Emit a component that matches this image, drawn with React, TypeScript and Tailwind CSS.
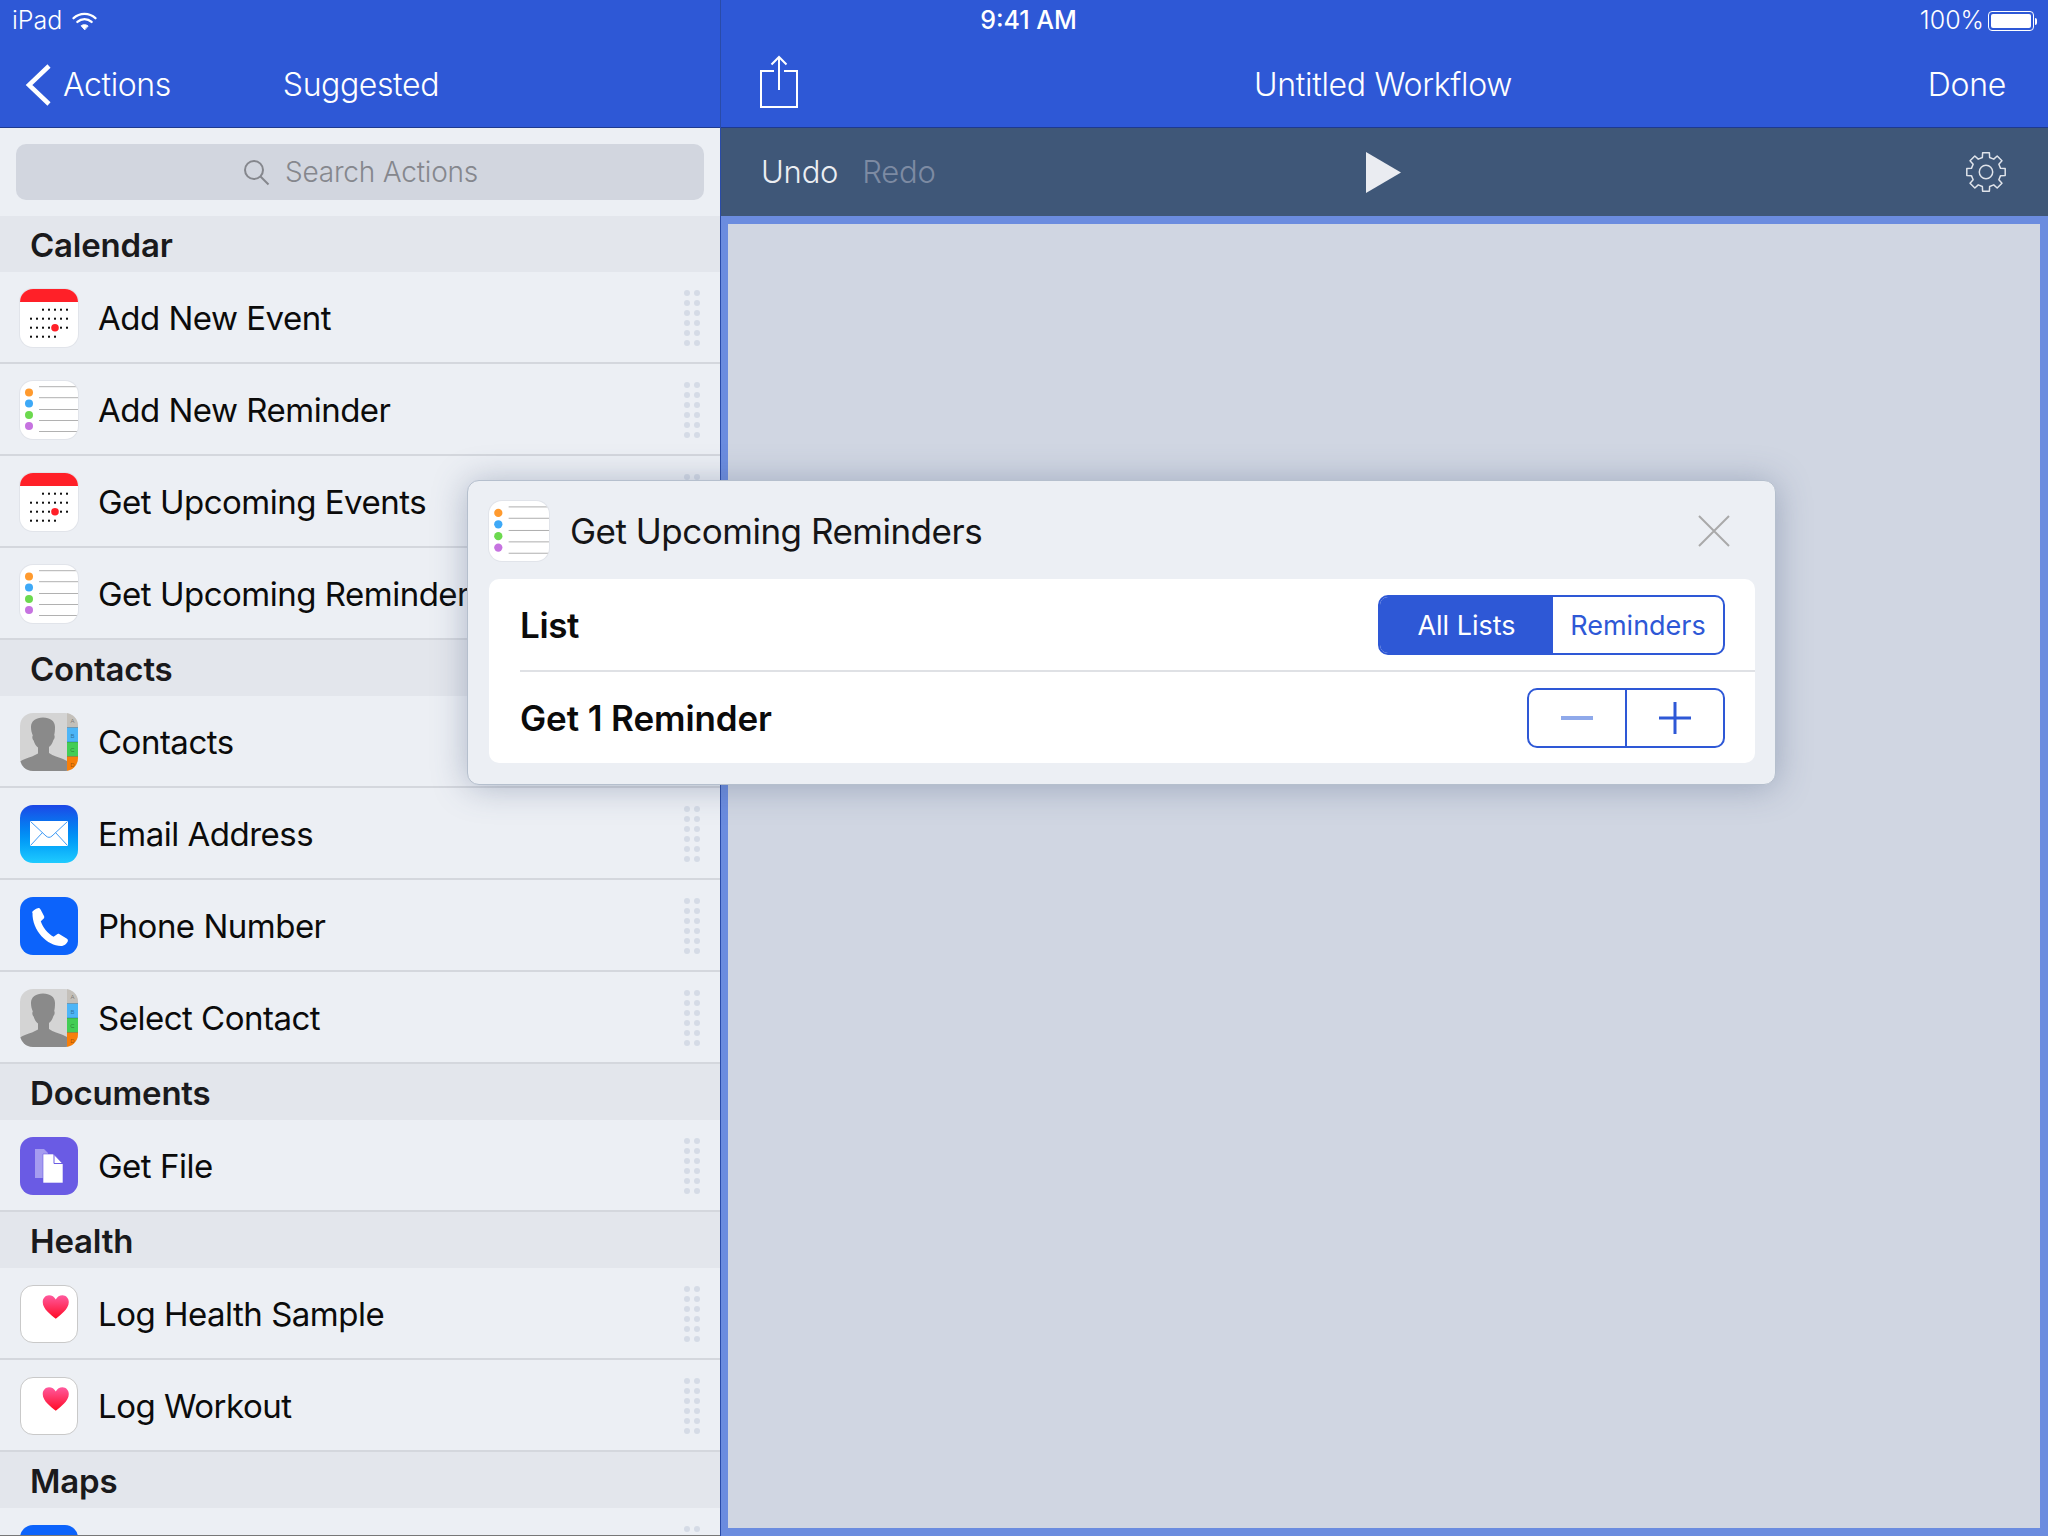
import React from "react";

const FONT = "font-['Inter','Noto_Sans',sans-serif]";

function IconShell({ size = 58, className = "", children }: { size?: number; className?: string; children: React.ReactNode }) {
  return (
    <div
      className={`shrink-0 overflow-hidden rounded-[13px] ${className}`}
      style={{ width: size, height: size }}
    >
      {children}
    </div>
  );
}

function CalendarIcon() {
  const rows = [
    { y: 20.7, xs: [23, 29, 35, 41, 47] },
    { y: 29.7, xs: [11, 17, 23, 29, 35, 41, 47] },
    { y: 38.7, xs: [11, 17, 23, 29, 41, 47] },
    { y: 47.7, xs: [11, 17, 23, 29, 35] },
  ];
  return (
    <IconShell className="bg-white shadow-[0_0_0_1px_#e1e4ea]">
      <svg viewBox="0 0 58 58" className="h-full w-full">
        <rect width="58" height="13" fill="#ff2028" />
        {rows.map((r) =>
          r.xs.map((x) => <rect key={`${r.y}-${x}`} x={x - 1} y={r.y - 1} width="2" height="2" fill="#111" />)
        )}
        <circle cx="35" cy="38.7" r="3.8" fill="#ff2028" />
      </svg>
    </IconShell>
  );
}

function RemindersIcon({ size = 58 }: { size?: number }) {
  const dots = [
    { y: 11.5, c: "#ff9a2e" },
    { y: 22.5, c: "#3ea9f7" },
    { y: 34, c: "#6cd94e" },
    { y: 45, c: "#c673e0" },
  ];
  return (
    <IconShell size={size} className="bg-white shadow-[0_0_0_1px_#e1e4ea]">
      <svg viewBox="0 0 58 58" className="h-full w-full">
        {[5.7, 16.7, 28.5, 39.5, 50.5].map((y) => (
          <line key={y} x1="19" x2="58" y1={y} y2={y} stroke="#a8a8a8" strokeWidth="0.9" />
        ))}
        {dots.map((d) => (
          <circle key={d.y} cx="9" cy={d.y} r="4" fill={d.c} />
        ))}
      </svg>
    </IconShell>
  );
}

function ContactsIcon() {
  return (
    <IconShell className="bg-[#d4d4d4]">
      <svg viewBox="0 0 58 58" className="h-full w-full">
        <path
          d="M11 14c0-6 5-9.500 12-9.500S35 8 35 14c0 3-.2 6-.8 8 .8 1 .6 3.500-.8 5-1 3.500-2.400 5.500-4.400 7v6c4 3 10 4 14 6l4 2v10.500H0V48.500c3-2.500 8-3.500 12-5l6-3v-6c-2-1.500-3.400-3.500-4.400-7-1.400-1.500-1.600-4-.8-5-.8-2-1.800-5-1.800-8z"
          fill="#8a8a8a"
        />
        <rect x="47" width="11" height="14.500" fill="#c4c0ba" />
        <rect x="47" y="14.500" width="11" height="14.500" fill="#4db5f7" />
        <rect x="47" y="29" width="11" height="14.500" fill="#43cd55" />
        <rect x="47" y="43.500" width="11" height="14.500" fill="#f77f0a" />
        <path d="M47 14.500h11M47 29h11M47 43.500h11" stroke="#00000040" strokeWidth="0.8" />
        {["A", "B", "C", "D"].map((l, i) => (
          <text key={l} x="52.500" y={10 + i * 14.500} fontSize="6" textAnchor="middle" fill="#00000066" fontFamily="Liberation Sans">
            {l}
          </text>
        ))}
      </svg>
    </IconShell>
  );
}

function MailIcon() {
  return (
    <IconShell className="bg-gradient-to-b from-[#1c46e6] to-[#1fcbff]">
      <svg viewBox="0 0 58 58" className="h-full w-full">
        <rect x="10" y="16" width="38" height="25" fill="#fff" />
        <path d="M10.500 16.500 26 31c2 1.800 4 1.800 6 0l15.500-14.500M10.500 40.500 22.500 27.500M47.500 40.500 35.500 27.500" fill="none" stroke="#3f9af5" strokeWidth="1" />
      </svg>
    </IconShell>
  );
}

function PhoneIcon() {
  return (
    <IconShell className="bg-[#0c63fb]">
      <svg viewBox="0 0 58 58" className="h-full w-full">
        <path
          d="M12 15.500c0-1.500 5-4.500 6.500-4.500 1 0 1.500.5 2.200 1.700l3.300 6.300c.5 1.100.3 2-.5 2.800l-2.700 2.500c1.500 5.500 7 12.500 12.800 15.500l3.200-2.400c.9-.7 1.800-.7 2.800-.1l6.600 4c1.200.7 1.700 1.300 1.700 2.100 0 2.300-3.700 5.600-7 5.600-13 0-29-15-28.400-33.500z"
          fill="#fff"
        />
      </svg>
    </IconShell>
  );
}

function FileIcon() {
  return (
    <IconShell className="bg-[#6a5be4]">
      <svg viewBox="0 0 58 58" className="h-full w-full">
        <path d="M15 12h9l4 4v25H15z" fill="#a59cf0" />
        <path d="M23 17h10.500L43 27v19H23z" fill="#fff" stroke="#6a5be4" strokeWidth="0.6" />
        <path d="M34 17v9.500h9" fill="none" stroke="#6a5be4" strokeWidth="1" />
      </svg>
    </IconShell>
  );
}

function HealthIcon() {
  return (
    <IconShell className="border border-[#c9c9c9] bg-white">
      <svg viewBox="0 0 58 58" className="h-full w-full">
        <defs>
          <linearGradient id="heartFill" x1="0" x2="0" y1="0" y2="1">
            <stop offset="0" stopColor="#ff5a9e" />
            <stop offset="1" stopColor="#ff0a25" />
          </linearGradient>
        </defs>
        <path
          d="M36 34C31 29.500 22.500 24 22.500 16.500 22.500 12.500 25.500 9.500 29 9.500c3 0 5.500 1.500 7 4.500 1.500-3 4-4.500 7-4.500 3.500 0 6.500 3 6.500 7C49.500 24 41 29.500 36 34z"
          fill="url(#heartFill)"
        />
      </svg>
    </IconShell>
  );
}

function MapsIcon() {
  return <IconShell className="bg-[#0c63fb]">{null}</IconShell>;
}

// 8 teeth, outline only
function gearPath() {
  const pt = (r: number, deg: number) => {
    const a = (deg * Math.PI) / 180;
    return `${(20 + r * Math.cos(a)).toFixed(2)} ${(20 + r * Math.sin(a)).toFixed(2)}`;
  };
  const parts: string[] = [];
  for (let i = 0; i < 8; i++) {
    const a = i * 45 - 90;
    parts.push(pt(15, a - 14), pt(19.5, a - 10), pt(19.5, a + 10), pt(15, a + 14));
  }
  return `M${parts.join("L")}z`;
}

function Grip() {
  return (
    <div className="mt-px grid h-14 w-4 shrink-0 grid-cols-2 gap-x-1 gap-y-1">
      {Array.from({ length: 12 }).map((_, i) => (
        <span key={i} className="h-1.5 w-1.5 rounded-full bg-[#d5dbe6]" />
      ))}
    </div>
  );
}

function ActionRow({ icon, label }: { icon: React.ReactNode; label: string }) {
  return (
    <div className="flex h-[92px] items-start border-b-2 border-[#d4d7dd] pt-[17px] pl-5 pr-5">
      {icon}
      <span className="ml-5 mt-[5px] flex-1 text-[33px] leading-[48px] tracking-[-0.5px] text-[#0b0b0b]">{label}</span>
      <Grip />
    </div>
  );
}

function SectionHeader({ title }: { title: string }) {
  return (
    <div className="flex h-14 items-center bg-[#e3e6ec] pl-[30px] pt-[4px] text-[33px] font-semibold tracking-[-0.2px] text-[#1a1a1c]">
      {title}
    </div>
  );
}

function StatusBar() {
  return (
    <div className="flex h-10 items-center bg-[#2e58d6] pt-[2px] text-[25px] font-light text-white">
      <div className="flex flex-1 items-center pl-3">
        <span>iPad</span>
        <svg viewBox="0 0 26 20" className="ml-[10px] h-[19px] w-[25px]" fill="none" stroke="#fff" strokeWidth="2.400" strokeLinecap="round">
          <path d="M1.500 6.500c6.500-6 16.500-6 23 0" />
          <path d="M5.500 10.500c4.500-4 10.500-4 15 0" />
          <path d="M13 18.500l-3.500-4c2-1.600 5-1.600 7 0z" fill="#fff" strokeWidth="1" />
        </svg>
      </div>
      <span className="ml-2 font-medium">9:41 AM</span>
      <div className="flex flex-1 items-center justify-end pr-[11px]">
        <span>100%</span>
        <div className="ml-1 h-5 w-[46px] rounded-[4px] border border-white p-[2px]">
          <div className="h-full w-full rounded-[2px] bg-white" />
        </div>
        <div className="ml-px h-[7px] w-[2px] rounded-r bg-white" />
      </div>
    </div>
  );
}

function Sidebar() {
  return (
    <div className="flex h-full w-[720px] shrink-0 flex-col">
      <div className="flex h-[88px] items-center border-b border-[#1e3a8f] bg-[#2e58d6] pt-[3px] text-[32px] font-light tracking-[-0.4px] text-white">
        <svg viewBox="0 0 26 42" className="ml-[25px] h-[42px] w-[26px]" fill="none" stroke="#fff" strokeWidth="4.500">
          <path d="M24 2 4 21l20 19" />
        </svg>
        <span className="ml-[12px]">Actions</span>
        <span className="ml-[112px]">Suggested</span>
      </div>
      <div className="flex h-[88px] shrink-0 items-center bg-[#eceff4] px-4">
        <div className="flex h-14 flex-1 items-center justify-center rounded-[10px] bg-[#d2d6df] text-[28px] font-light tracking-[-0.2px] text-[#85878d]">
          <svg viewBox="0 0 28 28" className="mr-[15px] h-7 w-7" fill="none" stroke="#85878d" strokeWidth="2">
            <circle cx="12" cy="12" r="9" />
            <path d="m18.500 18.500 8 8" />
          </svg>
          Search Actions
        </div>
      </div>
      <div className="min-h-0 flex-1 overflow-hidden border-b border-[#777] bg-[#eceff4]">
        <SectionHeader title="Calendar" />
        <ActionRow icon={<CalendarIcon />} label="Add New Event" />
        <ActionRow icon={<RemindersIcon />} label="Add New Reminder" />
        <ActionRow icon={<CalendarIcon />} label="Get Upcoming Events" />
        <ActionRow icon={<RemindersIcon />} label="Get Upcoming Reminders" />
        <SectionHeader title="Contacts" />
        <ActionRow icon={<ContactsIcon />} label="Contacts" />
        <ActionRow icon={<MailIcon />} label="Email Address" />
        <ActionRow icon={<PhoneIcon />} label="Phone Number" />
        <ActionRow icon={<ContactsIcon />} label="Select Contact" />
        <SectionHeader title="Documents" />
        <ActionRow icon={<FileIcon />} label="Get File" />
        <SectionHeader title="Health" />
        <ActionRow icon={<HealthIcon />} label="Log Health Sample" />
        <ActionRow icon={<HealthIcon />} label="Log Workout" />
        <SectionHeader title="Maps" />
        <ActionRow icon={<MapsIcon />} label="" />
      </div>
    </div>
  );
}

function Editor() {
  return (
    <div className="flex h-full min-w-0 flex-1 flex-col border-l border-[#2a4ba8]">
      <div className="flex h-[88px] shrink-0 items-center border-b border-[#1e3a8f] bg-[#2e58d6] pt-[3px] pl-[39px] pr-[42px] text-[32px] font-light tracking-[-0.3px] text-white">
        <div className="flex-1">
          <svg viewBox="0 0 38 54" className="-mt-[6px] h-[54px] w-[38px]" fill="none" stroke="#fff" strokeWidth="2">
            <path d="M14 16H1v36h36V16H24" />
            <path d="M19 2v33M11.500 9.500 19 2l7.500 7.500" />
          </svg>
        </div>
        <span>Untitled Workflow</span>
        <div className="flex-1 text-right">Done</div>
      </div>
      <div className="flex h-[88px] shrink-0 items-center bg-[#3f5778] pl-[42px] pr-[42px] text-[31px] font-light tracking-[-0.2px]">
        <div className="-ml-[2px] flex flex-1 items-center">
          <span className="text-[#eceef2]">Undo</span>
          <span className="ml-6 text-[#7d8ba3]">Redo</span>
        </div>
        <svg viewBox="0 0 35 41" className="h-[41px] w-[35px]">
          <path d="M0 0l35 20.500L0 41z" fill="#eaecf1" />
        </svg>
        <div className="flex flex-1 justify-end">
          <svg viewBox="0 0 40 40" className="h-10 w-10" fill="none" stroke="#dfe3ea" strokeWidth="1.500" strokeLinejoin="round">
            <path d={gearPath()} />
            <circle cx="20" cy="20" r="6.700" />
          </svg>
        </div>
      </div>
      <div className="min-h-0 flex-1 border-8 border-l-[7px] border-[#6b8cdf] bg-[#d0d6e2]" />
    </div>
  );
}

function ActionDialog() {
  return (
    <div className="absolute left-[467px] top-[480px] w-[1309px] rounded-[12px] border border-[#b5bfcd] bg-[#eceff4] pl-[21px] pr-[20px] pb-[21px] shadow-[0_2px_34px_rgba(70,90,125,0.38)]">
      <div className="flex h-[98px] items-center pt-[2px]">
        <RemindersIcon size={60} />
        <span className="ml-[21px] flex-1 text-[35px] tracking-[-0.5px] text-[#151517]">Get Upcoming Reminders</span>
        <svg viewBox="0 0 32 32" className="mr-[25px] h-8 w-8" fill="none" stroke="#a9a9a9" strokeWidth="2">
          <path d="M1 1l30 30M31 1 1 31" />
        </svg>
      </div>
      <div className="rounded-[10px] bg-white pl-[31px]">
        <div className="flex h-[93px] items-center border-b-2 border-[#dfe1e5] pr-[30px]">
          <span className="mt-[2px] flex-1 text-[35px] font-semibold tracking-[-0.4px] text-[#0b0b0b]">List</span>
          <div className="mt-px flex h-[60px] w-[347px] overflow-hidden rounded-[10px] border-2 border-[#2e58d6] text-[27px]">
            <div className="flex w-[173px] items-center justify-center bg-[#2e58d6] pt-[2px] text-white">All Lists</div>
            <div className="flex flex-1 items-center justify-center pt-[2px] text-[#2e58d6]">Reminders</div>
          </div>
        </div>
        <div className="flex h-[91px] items-center pr-[30px]">
          <span className="mt-[2px] flex-1 text-[35px] font-semibold tracking-[-0.1px] text-[#0b0b0b]">Get 1 Reminder</span>
          <div className="mt-px flex h-[60px] w-[198px] overflow-hidden rounded-[10px] border-2 border-[#2e58d6]">
            <div className="flex flex-1 items-center justify-center border-r-2 border-[#2e58d6]">
              <span className="h-1 w-8 bg-[#8fa9ea]" />
            </div>
            <div className="flex flex-1 items-center justify-center">
              <svg viewBox="0 0 32 32" className="h-8 w-8" stroke="#2e58d6" strokeWidth="3">
                <path d="M0 16h32M16 0v32" />
              </svg>
            </div>
          </div>
        </div>
      </div>
    </div>
  );
}

export default function App() {
  return (
    <div className={`relative flex h-[1536px] w-[2048px] flex-col overflow-hidden ${FONT}`}>
      <StatusBar />
      <div className="flex min-h-0 flex-1">
        <Sidebar />
        <Editor />
      </div>
      <span className="absolute left-[720px] top-0 h-10 w-px bg-[#2a4ba8]" />
      <ActionDialog />
    </div>
  );
}
